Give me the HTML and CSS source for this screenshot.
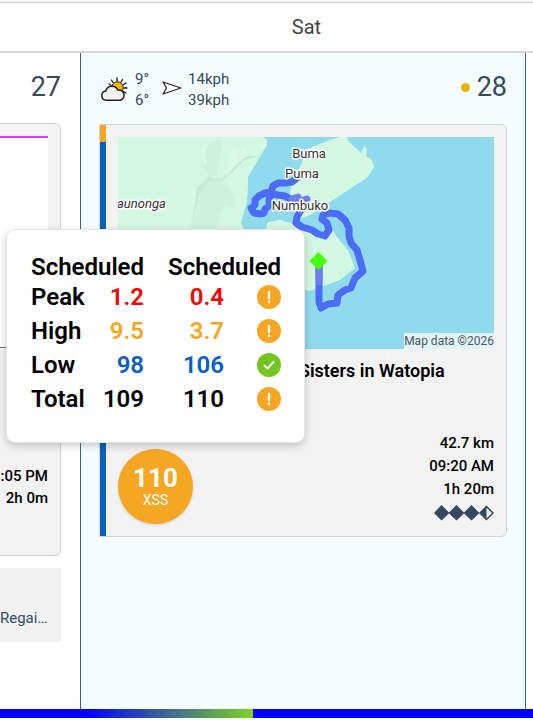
FILE: index.html
```
<!DOCTYPE html>
<html lang="en">
<head>
  <meta charset="UTF-8">
  <meta name="viewport" content="width=device-width, initial-scale=1.0">
  <title>Training Calendar</title>
  <link rel="stylesheet" href="styles.css">
</head>
<body>
  <header class="weekdays">
    <div></div>
    <div class="weekday">Sat</div>
    <div></div>
  </header>

  <main class="week">
    <section class="day">
      <div class="day-header">
        <span class="date">27</span>
      </div>
      <article class="card card-prev">
        <div class="chart"></div>
        <div class="stats">
          <div>:05 PM</div>
          <div>2h 0m</div>
        </div>
      </article>
      <div class="note">Regai…</div>
    </section>

    <section class="day today">
      <div class="day-header">
        <div class="weather">
          <svg class="weather-icon" width="28" height="26" viewBox="0 0 28 26">
            <g stroke="#222" stroke-width="1.4" stroke-linecap="round">
              <path d="M17 1v3M11.500 3l1.500 2.500M22.500 2.500l-1.500 2.500M9 7l2 1.500M26 6l-2.500 1.500M27 11h-3M26 16l-2.500-1.500M22 19.500l-1-2" />
            </g>
            <circle cx="17.500" cy="10.500" r="5.700" fill="#ffb300" stroke="#222" stroke-width="1" />
            <path d="M6 23.300a4.700 4.700 0 0 1-.3-9.300 6.500 6.500 0 0 1 12.300-.8 5 5 0 0 1 2 10.100z" fill="#f2f2f2" stroke="#222" stroke-width="1.500" />
          </svg>
          <div>
            <div>9°</div>
            <div>6°</div>
          </div>
          <svg class="wind-icon" width="20" height="14" viewBox="0 0 20 14">
            <path d="M1 1L19 7 1 13 4.500 7z" fill="#fff" stroke="#222" stroke-width="1.300" stroke-linejoin="round" />
          </svg>
          <div>
            <div>14kph</div>
            <div>39kph</div>
          </div>
        </div>
        <span class="date"><span class="dot"></span>28</span>
      </div>

      <article class="card card-activity">
        <svg class="map" viewBox="0 0 376 212">
          <rect width="376" height="212" fill="#90daee" />
          <!-- land -->
          <g fill="#d3f8e2">
            <path d="M0 0H145L149 3V8L130 40V50L129 65 123 86 127 94V212H0z" />
            <path d="M222 0H229L231 5 243 16 246 9 249 12 248 19 254 23 256 30 250 40 212 65 192 78 179 83 175 66 172 55 175 43 184 26 187 13 199 8 212 3z" />
            <path d="M147 94L150 85 162 83 172 86 187 93 209 96 214 92 219 100 230 113 237 131 222 143 192 154 175 150 147 120z" />
          </g>
          <!-- hills -->
          <path d="M92 5L104 2 99 38 90 40 84 25zM104 46L112 50 118 72 106 68 98 92H72L79 51 90 42z" fill="#cdf2dc" />
          <path d="M75 80L79 51 90 40 104 41 127 20 144 18 127 23 104 45 91 44 82 56z" fill="#c5ebd5" />
          <path d="M87 5L83 18 88 30zM115 5L108 40 122 22zM125 9L123 18 129 15z" fill="#dcf9e7" />
          <!-- route -->
          <g class="route">
            <path d="M180 40L174 45 167 46 160 46 155 49 153 55 147 56 141 59 137 63 137 68 133 71 136 76 142 77 146 76 147 72 151 69 151 63 153 55 159 58 167 59 174 63 182 66 183 73 179 80 178 86 184 90 194 93 200 97 207 99 211 93 209 86 204 82 205 78 212 76 220 77 227 83 231 91 231 99 233 106 239 113 242 123 245 134 237 141 233 151 227 153 220 158 219 166 210 167 203 171 201 165 201 124" />
            <path class="overlap" d="M174 62L180 60 183 64 189 62 182 66 183 73M201 145V128" />
          </g>
          <path d="M200.500 115L209.500 124 200.500 133 191.500 124z" fill="#4f0" />
          <text x="191" y="21" text-anchor="middle">Buma</text>
          <text x="184" y="41" text-anchor="middle">Puma</text>
          <text x="182" y="73" text-anchor="middle">Numbuko</text>
          <text x="-1" y="71" font-style="italic">aunonga</text>
          <rect x="286" y="196" width="90" height="16" fill="#fff" opacity="0.7" />
          <text class="copyright" x="376" y="208" text-anchor="end">Map data ©2026</text>
        </svg>
        <h2 class="title">Zwift - Session: Three Sisters in Watopia</h2>
        <div class="summary">
          <div class="score">
            <strong>110</strong>
            <span>XSS</span>
          </div>
          <div class="stats">
            <div>42.7 km</div>
            <div>09:20 AM</div>
            <div>1h 20m</div>
            <svg class="difficulty" width="60" height="16" viewBox="0 0 60 16">
              <path d="M7.500 0L15.500 8 7.500 15.500 0 8zM22.500 0L30.500 8 22.500 15.500 14.500 8zM37.500 0L45.500 8 37.500 15.500 29.500 8z" fill="#34495e" />
              <path d="M52.500 1.500L59 8 52.500 14.500 46 8z" fill="none" stroke="#34495e" stroke-width="1.500" />
              <path d="M52.500 1V15L46 8z" fill="#34495e" />
            </svg>
          </div>
        </div>
      </article>
    </section>

    <section class="day next"></section>

    <div class="popup">
      <table>
        <thead>
          <tr>
            <th colspan="2">Scheduled</th>
            <th colspan="2">Scheduled</th>
          </tr>
        </thead>
        <tbody>
          <tr class="peak">
            <th>Peak</th>
            <td>1.2</td>
            <td>0.4</td>
            <td><svg class="status" viewBox="0 0 24 24"><circle cx="12" cy="12" r="12" fill="#f5a623" /><path d="M12 7v6M12 16.800v.2" stroke="#fff" stroke-width="2.400" stroke-linecap="round" /></svg></td>
          </tr>
          <tr class="high">
            <th>High</th>
            <td>9.5</td>
            <td>3.7</td>
            <td><svg class="status" viewBox="0 0 24 24"><circle cx="12" cy="12" r="12" fill="#f5a623" /><path d="M12 7v6M12 16.800v.2" stroke="#fff" stroke-width="2.400" stroke-linecap="round" /></svg></td>
          </tr>
          <tr class="low">
            <th>Low</th>
            <td>98</td>
            <td>106</td>
            <td><svg class="status" viewBox="0 0 24 24"><circle cx="12" cy="12" r="12" fill="#73c620" /><path d="M7.500 12.500l3 3 6-6.500" fill="none" stroke="#fff" stroke-width="2" stroke-linecap="round" stroke-linejoin="round" /></svg></td>
          </tr>
          <tr>
            <th>Total</th>
            <td>109</td>
            <td>110</td>
            <td><svg class="status" viewBox="0 0 24 24"><circle cx="12" cy="12" r="12" fill="#f5a623" /><path d="M12 7v6M12 16.800v.2" stroke="#fff" stroke-width="2.400" stroke-linecap="round" /></svg></td>
          </tr>
        </tbody>
      </table>
    </div>
  </main>

  <footer class="progress"></footer>
</body>
</html>
```
FILE: styles.css
```
* {
  box-sizing: border-box;
}

body {
  margin: 0;
  padding: 2px 0;
  min-height: 100vh;
  display: flex;
  flex-direction: column;
  font-family: Roboto, sans-serif;
  font-size: 15px;
  color: #34495e;
  background-color: #fafafa;
}

.weekdays {
  display: grid;
  grid-template-columns: 87px 1fr 7px;
  align-items: center;
  height: 51px;
  background-color: #fff;
  border-top: 1px solid #d4d4d8;
  border-bottom: 2px solid #d4d4dc;
}

.weekday {
  font-size: 20px;
  text-align: center;
  color: #444;
}

.week {
  position: relative;
  flex: 1;
  display: grid;
  grid-template-columns: 80px 1fr 7px;
  background-color: #fff;
}

.day {
  padding-right: 19px;
  min-width: 0;
}

.today {
  padding: 0 18px;
  background-color: #f4fdff;
  border-left: 1px solid #2b7278;
  border-right: 1px solid #2b7278;
}

.next {
  padding: 0;
}

.day-header {
  display: flex;
  justify-content: flex-end;
  align-items: center;
  height: 70px;
}

.today .day-header {
  justify-content: space-between;
}

.date {
  display: flex;
  align-items: center;
  gap: 7px;
  padding-bottom: 2px;
  font-size: 27px;
}

.dot {
  width: 9px;
  height: 9px;
  border-radius: 50%;
  background-color: #eab308;
}

.weather {
  display: flex;
  align-items: center;
  line-height: 21px;
  padding-top: 3px;
}

.weather-icon {
  margin: 0 7px 0 1px;
}

.wind-icon {
  margin: 0 6px 4px 13px;
}

.card {
  display: flex;
  flex-direction: column;
  background-color: #f3f3f3;
  border: 1px solid #d4d4d8;
  border-radius: 6px;
}

.card-prev {
  height: 433px;
  padding: 12px 12px 12px 0;
  border-left: none;
  border-radius: 0 6px 6px 0;
}

.chart {
  height: 212px;
  background-color: #fff;
  border-top: 2px solid #d63df5;
  border-bottom: 1px solid #777;
}

.card-prev .stats {
  margin-top: 117px;
}

.card-activity {
  margin-top: 1px;
  padding: 12px 12px 12px 18px;
  border-radius: 0 6px 6px 0;
  background-image: linear-gradient(#f5a623 17px, #0b5fc0 17px);
  background-size: 6px 100%;
  background-repeat: no-repeat;
}

.map {
  display: block;
  width: 100%;
}

.map text {
  font-size: 13px;
  fill: #333;
  stroke: #fff;
  stroke-width: 3px;
  stroke-linejoin: round;
  paint-order: stroke;
}

.map .copyright {
  font-size: 12px;
  fill: #555;
  stroke: none;
}

.route path {
  fill: none;
  stroke: #4a6cf7;
  stroke-width: 7px;
  stroke-linecap: round;
  stroke-linejoin: round;
}

.route .overlap {
  stroke: #6f7cee;
}

.title {
  margin: 11px 0 0;
  font-size: 18px;
  line-height: 22px;
  font-weight: 600;
  color: #000;
  white-space: nowrap;
}

.summary {
  display: flex;
  justify-content: space-between;
  margin-top: 50px;
}

.score {
  display: flex;
  flex-direction: column;
  align-items: center;
  width: 75px;
  height: 75px;
  margin-top: 17px;
  padding-top: 15px;
  border-radius: 50%;
  background-color: #f5a623;
  color: #fff;
  box-shadow: 0 1px 3px rgba(0, 0, 0, 0.15);
}

.score strong {
  font-size: 26px;
  line-height: 28px;
}

.score span {
  font-size: 14px;
  line-height: 16px;
}

.stats {
  text-align: right;
  font-weight: 500;
  line-height: 22px;
  color: #000;
  white-space: nowrap;
}

.summary .stats {
  line-height: 23px;
}

.difficulty {
  display: block;
  margin: 4px 0 0 auto;
}

.note {
  height: 74px;
  margin-top: 12px;
  padding-top: 40px;
  line-height: 20px;
  background-color: #f2f2f2;
  overflow: hidden;
}

.popup {
  position: absolute;
  top: 176px;
  left: 6px;
  padding: 24px 23px 26px 24px;
  background-color: #fff;
  border: 1px solid #e5e5e5;
  border-radius: 9px;
  box-shadow: 0 3px 8px rgba(0, 0, 0, 0.2);
}

.popup table {
  border-collapse: collapse;
  font-size: 24px;
  color: #000;
}

.popup th,
.popup td {
  padding: 0;
  height: 34px;
  font-weight: 600;
  line-height: 28px;
  text-align: right;
}

.popup thead th {
  height: 26px;
  line-height: 26px;
}

.popup thead th + th {
  padding-left: 24px;
}

.popup tbody th {
  text-align: left;
}

.popup td:nth-child(3) {
  width: 80px;
}

.peak td {
  color: #f00;
}

.high td {
  color: #f5a623;
}

.low td {
  color: #0b5fc0;
}

.status {
  display: block;
  width: 24px;
  height: 24px;
  margin-left: auto;
}

.progress {
  height: 9px;
  background: linear-gradient(to right, #00f 16%, #7ed321 47.5%, #00f 47.5%);
}
```
